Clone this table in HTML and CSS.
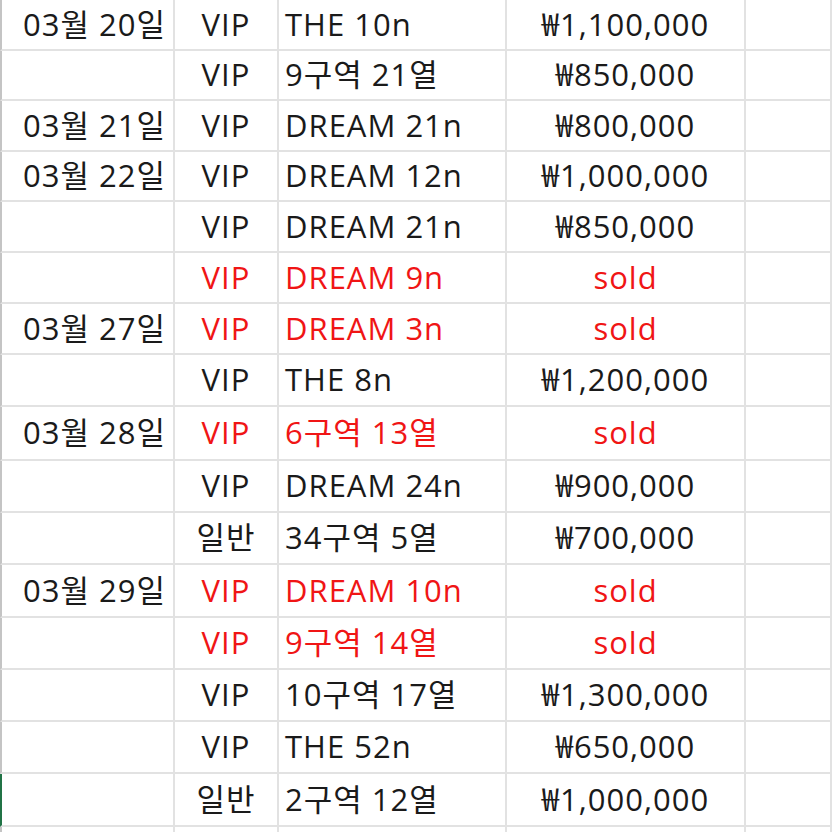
FILE: index.html
```html
<!DOCTYPE html>
<html lang="ko">
<head>
<meta charset="utf-8">
<title>Sheet</title>
<link rel="stylesheet" href="styles.css">
</head>
<body>
<div class="sheet">
  <div class="c date">03월 20일</div><div class="c mid">VIP</div><div class="c left">THE 10n</div><div class="c price">₩1,100,000</div><div class="c"></div>
  <div class="c date"></div><div class="c mid">VIP</div><div class="c left">9구역 21열</div><div class="c price">₩850,000</div><div class="c"></div>
  <div class="c date">03월 21일</div><div class="c mid">VIP</div><div class="c left">DREAM 21n</div><div class="c price">₩800,000</div><div class="c"></div>
  <div class="c date">03월 22일</div><div class="c mid">VIP</div><div class="c left">DREAM 12n</div><div class="c price">₩1,000,000</div><div class="c"></div>
  <div class="c date"></div><div class="c mid">VIP</div><div class="c left">DREAM 21n</div><div class="c price">₩850,000</div><div class="c"></div>
  <div class="c date"></div><div class="c mid red">VIP</div><div class="c left red">DREAM 9n</div><div class="c price red">sold</div><div class="c"></div>
  <div class="c date">03월 27일</div><div class="c mid red">VIP</div><div class="c left red">DREAM 3n</div><div class="c price red">sold</div><div class="c"></div>
  <div class="c date"></div><div class="c mid">VIP</div><div class="c left">THE 8n</div><div class="c price">₩1,200,000</div><div class="c"></div>
  <div class="c date">03월 28일</div><div class="c mid red">VIP</div><div class="c left red">6구역 13열</div><div class="c price red">sold</div><div class="c"></div>
  <div class="c date"></div><div class="c mid">VIP</div><div class="c left">DREAM 24n</div><div class="c price">₩900,000</div><div class="c"></div>
  <div class="c date"></div><div class="c mid">일반</div><div class="c left">34구역 5열</div><div class="c price">₩700,000</div><div class="c"></div>
  <div class="c date">03월 29일</div><div class="c mid red">VIP</div><div class="c left red">DREAM 10n</div><div class="c price red">sold</div><div class="c"></div>
  <div class="c date"></div><div class="c mid red">VIP</div><div class="c left red">9구역 14열</div><div class="c price red">sold</div><div class="c"></div>
  <div class="c date"></div><div class="c mid">VIP</div><div class="c left">10구역 17열</div><div class="c price">₩1,300,000</div><div class="c"></div>
  <div class="c date"></div><div class="c mid">VIP</div><div class="c left">THE 52n</div><div class="c price">₩650,000</div><div class="c"></div>
  <div class="c date selected"></div><div class="c mid">일반</div><div class="c left">2구역 12열</div><div class="c price">₩1,000,000</div><div class="c"></div>
  <div class="c date"></div><div class="c mid"></div><div class="c left"></div><div class="c price"></div><div class="c"></div>
</div>
</body>
</html>
```

FILE: styles.css
```css
html, body {
  margin: 0;
  padding: 0;
  background: #ffffff;
  overflow: hidden;
}

.sheet {
  display: grid;
  width: 832px;
  grid-template-columns: 175px 104px 228px 239px 1fr;
  grid-template-rows: 51px 50px 51px 50px 51px 51px 51px 52px 54px 52px 52px 53px 52px 52px 52px 53px 40px;
  font-family: "Open Sans", "Noto Sans CJK KR", sans-serif;
  font-size: 31px;
  letter-spacing: 1px;
  color: #1a1a1a;
}

.c {
  box-sizing: border-box;
  border-right: 2px solid #e2e2e2;
  border-bottom: 2px solid #e2e2e2;
  display: flex;
  align-items: center;
  white-space: nowrap;
  overflow: hidden;
  line-height: 1;
  padding-bottom: 1px;
}

.date {
  border-left: 2px solid #c4c4c4;
  justify-content: flex-end;
  padding-right: 7px;
}

.date.selected {
  border-left-color: #217346;
}

.mid {
  justify-content: center;
}

.left {
  justify-content: flex-start;
  padding-left: 6px;
}

.price {
  justify-content: center;
}

.red {
  color: #f01515;
}
```
